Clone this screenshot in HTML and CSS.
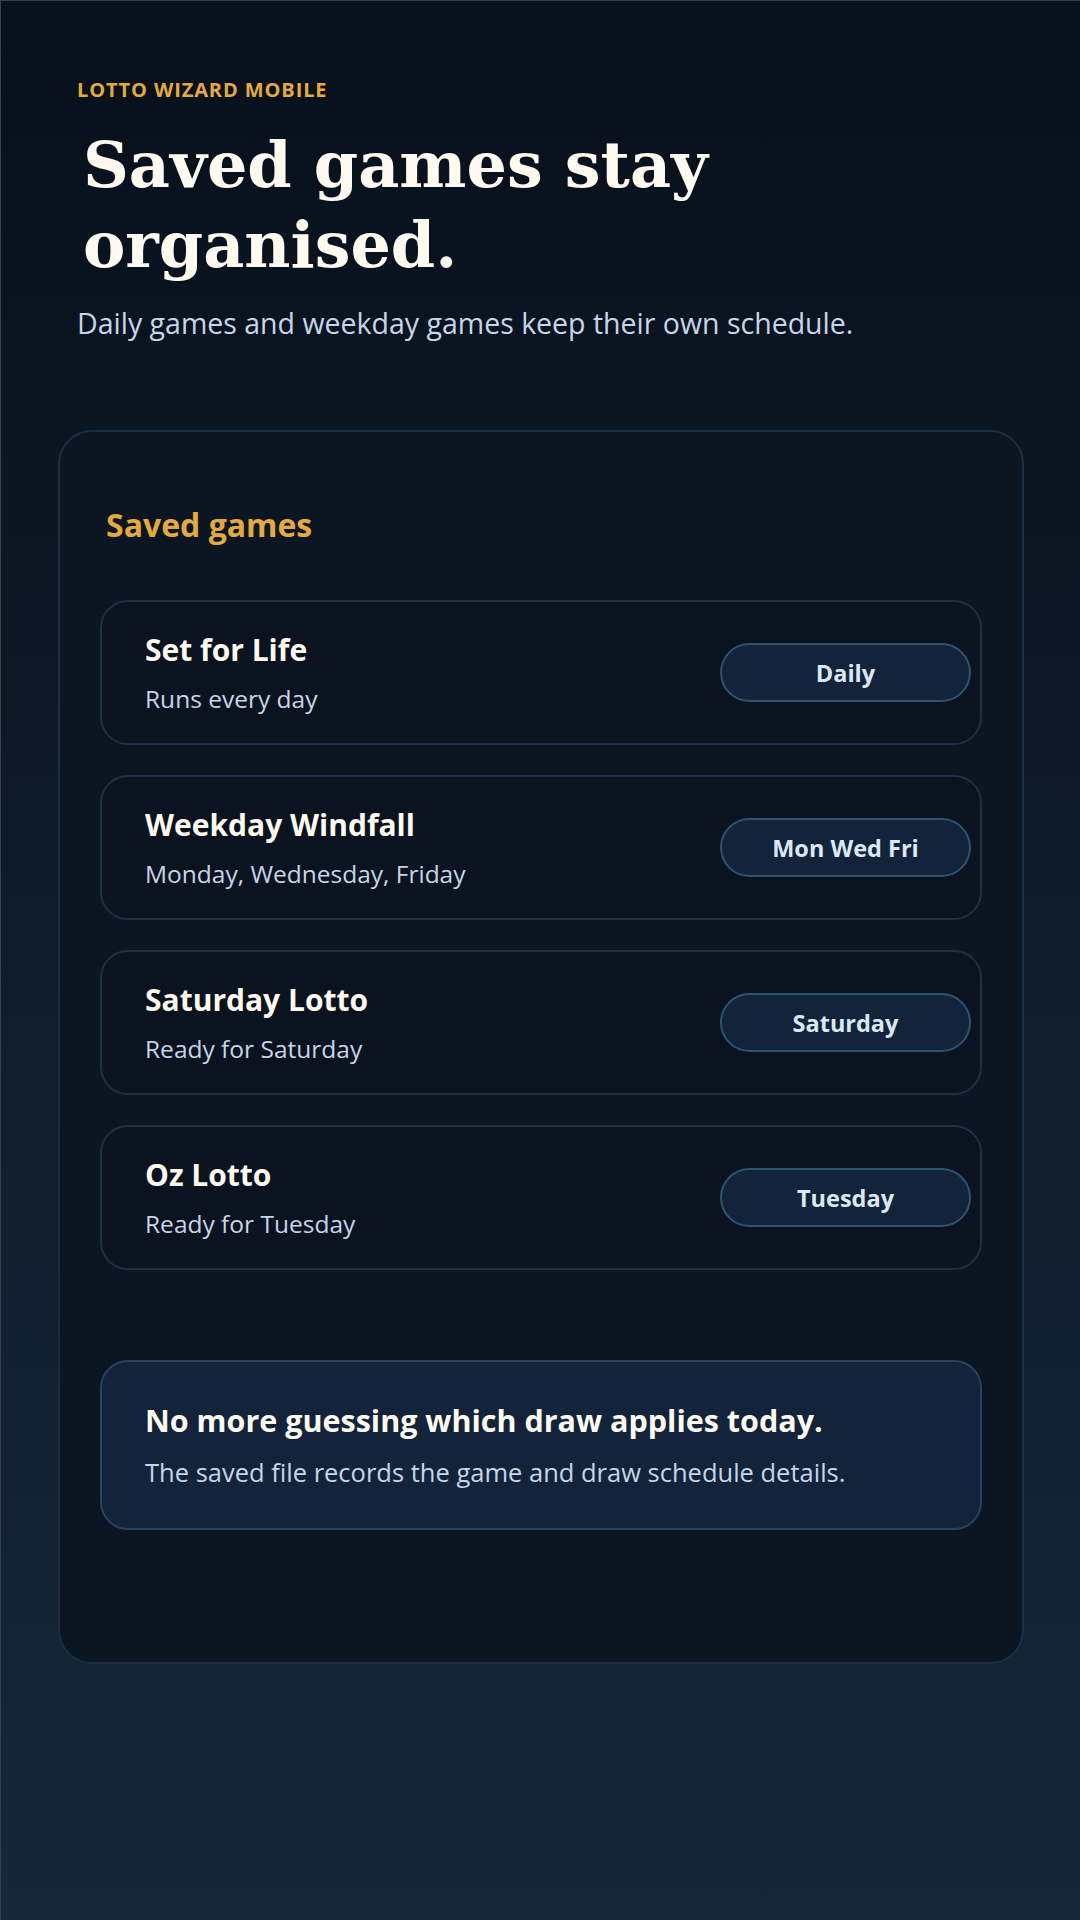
FILE: index.html
```html
<!DOCTYPE html>
<html lang="en">
<head>
    <meta charset="UTF-8">
    <meta name="viewport" content="width=device-width, initial-scale=1.0">
    <title>Lotto Wizard Mobile</title>
    <link rel="stylesheet" href="styles.css">
</head>
<body>
    <div class="screen">
        <header class="intro">
            <p class="eyebrow">LOTTO WIZARD MOBILE</p>
            <h1>Saved games stay organised.</h1>
            <p class="lead">Daily games and weekday games keep their own schedule.</p>
        </header>

        <section class="panel">
            <h2>Saved games</h2>

            <div class="game-list">
                <div class="game">
                    <div class="game-info">
                        <h3>Set for Life</h3>
                        <p>Runs every day</p>
                    </div>
                    <span class="pill">Daily</span>
                </div>
                <div class="game">
                    <div class="game-info">
                        <h3>Weekday Windfall</h3>
                        <p>Monday, Wednesday, Friday</p>
                    </div>
                    <span class="pill">Mon Wed Fri</span>
                </div>
                <div class="game">
                    <div class="game-info">
                        <h3>Saturday Lotto</h3>
                        <p>Ready for Saturday</p>
                    </div>
                    <span class="pill">Saturday</span>
                </div>
                <div class="game">
                    <div class="game-info">
                        <h3>Oz Lotto</h3>
                        <p>Ready for Tuesday</p>
                    </div>
                    <span class="pill">Tuesday</span>
                </div>
            </div>

            <div class="callout">
                <h3>No more guessing which draw applies today.</h3>
                <p>The saved file records the game and draw schedule details.</p>
            </div>
        </section>
    </div>
</body>
</html>
```

FILE: styles.css
```css
* {
    box-sizing: border-box;
}
html, body {
    margin: 0;
    padding: 0;
}
body {
    min-height: 1920px;
    font-family: "Open Sans", "Noto Sans", sans-serif;
    color: #fffaf0;
    background: linear-gradient(180deg, #07101b 0%, #0f1c2b 50%, #152739 100%);
    border-top: 1px solid #35414b;
    border-left: 1px solid #35414b;
}
.screen {
    padding: 76px 56px 0 57px;
}
.intro {
    padding: 0 0 0 19px;
}
.eyebrow {
    margin: 0;
    font-size: 20px;
    font-weight: 700;
    line-height: 26px;
    letter-spacing: 0.9px;
    color: #e3a942;
}
h1 {
    margin: 22px 0 0 6px;
    font-family: "DejaVu Serif", serif;
    font-size: 63.5px;
    line-height: 80px;
    font-weight: 700;
    color: #fffaf0;
    max-width: 760px;
}
.lead {
    margin: 19px 0 0;
    font-size: 28.5px;
    line-height: 38px;
    color: #c6d6e8;
}
.panel {
    margin-top: 88px;
    padding: 73px 40px 132px 40px;
    background: #0c1622;
    border: 2px solid #1c2e42;
    border-radius: 34px;
}
.panel h2 {
    margin: 0 0 0 6px;
    font-size: 32px;
    line-height: 40px;
    font-weight: 700;
    color: #e3a942;
}
.game-list {
    display: flex;
    flex-direction: column;
    gap: 30px;
    margin-top: 55px;
}
.game {
    display: flex;
    align-items: center;
    justify-content: space-between;
    height: 145px;
    padding: 0 9px 0 43px;
    background: #0a131f;
    border: 2px solid #1d3045;
    border-radius: 28px;
}
.game h3 {
    margin: 0;
    font-size: 30px;
    line-height: 38px;
    font-weight: 700;
    color: #fffaf0;
}
.game p {
    margin: 14px 0 0;
    font-size: 24.5px;
    line-height: 32px;
    color: #c6d6e8;
}
.pill {
    width: 251px;
    height: 59px;
    display: flex;
    align-items: center;
    justify-content: center;
    background: #13233a;
    border: 2px solid #2c5473;
    border-radius: 30px;
    font-size: 23.5px;
    font-weight: 700;
    color: #dce8f5;
}
.callout {
    margin-top: 90px;
    padding: 38px 43px 39px;
    background: #13233a;
    border: 2px solid #27445d;
    border-radius: 28px;
}
.callout h3 {
    margin: 0;
    font-size: 30.5px;
    line-height: 40px;
    font-weight: 700;
    color: #fffaf0;
}
.callout p {
    margin: 15px 0 0;
    font-size: 25.5px;
    line-height: 34px;
    color: #c6d6e8;
}
```
